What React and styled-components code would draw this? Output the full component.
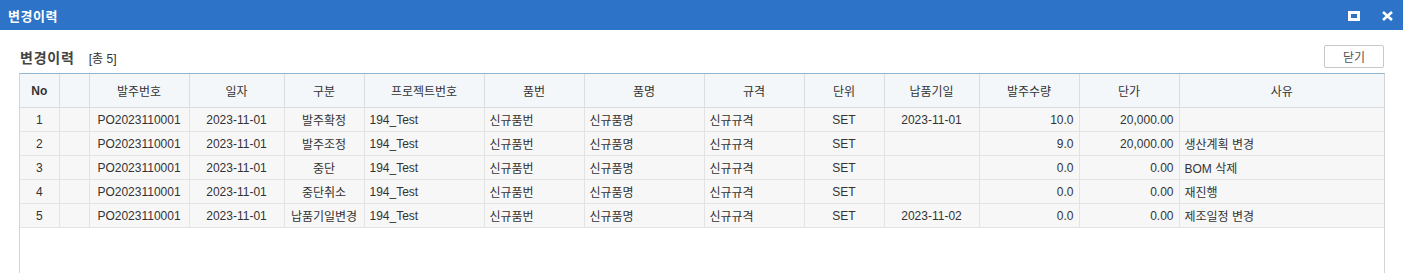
import styled, { createGlobalStyle } from "styled-components"

const GlobalStyle = createGlobalStyle`
    html, body {
        margin: 0;
        padding: 0;
        background: #ffffff;
        overflow: hidden;
    }
    body {
        font-family: "Liberation Sans", "Noto Sans CJK KR", sans-serif;
        color: #333333;
    }
`

const columns = [
    { key: "no", label: "No", width: 39, align: "center" },
    { key: "chk", label: "", width: 30, align: "center" },
    { key: "po", label: "발주번호", width: 100, align: "center" },
    { key: "date", label: "일자", width: 95, align: "center" },
    { key: "type", label: "구분", width: 80, align: "center" },
    { key: "project", label: "프로젝트번호", width: 120, align: "left" },
    { key: "itemNo", label: "품번", width: 100, align: "left" },
    { key: "itemName", label: "품명", width: 120, align: "left" },
    { key: "spec", label: "규격", width: 100, align: "left" },
    { key: "unit", label: "단위", width: 80, align: "center" },
    { key: "due", label: "납품기일", width: 95, align: "center" },
    { key: "qty", label: "발주수량", width: 100, align: "right" },
    { key: "price", label: "단가", width: 100, align: "right" },
    { key: "reason", label: "사유", width: null, align: "left" },
]

const base = {
    po: "PO2023110001",
    date: "2023-11-01",
    project: "194_Test",
    itemNo: "신규품번",
    itemName: "신규품명",
    spec: "신규규격",
    unit: "SET",
}

const rows = [
    { no: 1, type: "발주확정", due: "2023-11-01", qty: "10.0", price: "20,000.00", reason: "" },
    { no: 2, type: "발주조정", due: "", qty: "9.0", price: "20,000.00", reason: "생산계획 변경" },
    { no: 3, type: "중단", due: "", qty: "0.0", price: "0.00", reason: "BOM 삭제" },
    { no: 4, type: "중단취소", due: "", qty: "0.0", price: "0.00", reason: "재진행" },
    { no: 5, type: "납품기일변경", due: "2023-11-02", qty: "0.0", price: "0.00", reason: "제조일정 변경" },
].map((r) => ({ ...base, ...r }))

export default function App() {
    return (
        <Window>
            <GlobalStyle />
            <TitleBar>
                <h1>변경이력</h1>
                <WinButtons>
                    <svg width="12" height="10" viewBox="0 0 12 10">
                        <rect x="1.5" y="1.5" width="9" height="7" fill="none" stroke="#fff" strokeWidth="3" />
                    </svg>
                    <svg width="11" height="10" viewBox="0 0 11 10">
                        <path d="M1 1 L10 9 M10 1 L1 9" stroke="#fff" strokeWidth="2.6" />
                    </svg>
                </WinButtons>
            </TitleBar>
            <Body>
                <Toolbar>
                    <Heading>
                        <h2>변경이력</h2>
                        <span>[총 {rows.length}]</span>
                    </Heading>
                    <CloseButton>닫기</CloseButton>
                </Toolbar>
                <Grid>
                    <table>
                        <colgroup>
                            {columns.map((c) => (
                                <col key={c.key} style={c.width ? { width: c.width } : undefined} />
                            ))}
                        </colgroup>
                        <thead>
                            <tr>
                                {columns.map((c) => (
                                    <HeadCell key={c.key} $bold={c.key === "no"}>
                                        {c.label}
                                    </HeadCell>
                                ))}
                            </tr>
                        </thead>
                        <tbody>
                            {rows.map((r) => (
                                <tr key={r.no}>
                                    {columns.map((c) => (
                                        <Cell key={c.key} $align={c.align}>
                                            {r[c.key]}
                                        </Cell>
                                    ))}
                                </tr>
                            ))}
                        </tbody>
                    </table>
                </Grid>
            </Body>
        </Window>
    )
}

const Window = styled.div`
    width: 1403px;
    height: 273px;
    overflow: hidden;
    display: flex;
    flex-direction: column;
`

const TitleBar = styled.header`
    height: 30px;
    flex: none;
    background: #2d74c8;
    display: flex;
    align-items: center;
    justify-content: space-between;
    padding: 0 10px 0 8px;
    h1 {
        margin: 0;
        font-size: 13px;
        font-weight: bold;
        color: #ffffff;
        letter-spacing: 0.5px;
    }
`

const WinButtons = styled.div`
    display: flex;
    align-items: center;
    gap: 22px;
    padding-top: 1px;
`

const Body = styled.main`
    flex: 1;
    padding: 15px 18px 0 19px;
    display: flex;
    flex-direction: column;
`

const Toolbar = styled.div`
    display: flex;
    align-items: center;
    justify-content: space-between;
    height: 23px;
    margin-bottom: 5px;
`

const Heading = styled.div`
    display: flex;
    align-items: baseline;
    gap: 14px;
    padding-left: 1px;
    h2 {
        margin: 0;
        font-size: 14px;
        font-weight: bold;
        color: #444444;
        letter-spacing: 0.8px;
    }
    span {
        font-size: 12px;
        color: #333333;
    }
`

const CloseButton = styled.button`
    width: 60px;
    height: 23px;
    border: 1px solid #c8c8c8;
    border-radius: 2px;
    background: #ffffff;
    font-family: "Liberation Sans", "Noto Sans CJK KR", sans-serif;
    font-size: 12px;
    color: #555555;
    padding: 0;
    margin-right: 1px;
`

const Grid = styled.div`
    flex: 1;
    width: 1366px;
    box-sizing: border-box;
    border: 1px solid #d4d4d4;
    border-top: 1px solid #8fb7d3;
    border-bottom: none;
    table {
        width: 100%;
        border-collapse: collapse;
        table-layout: fixed;
    }
`

const HeadCell = styled.th`
    height: 33px;
    padding: 0;
    background: #f3f7fa;
    border-right: 1px solid #d9dde0;
    border-bottom: 1px solid #d9dde0;
    font-size: 12px;
    font-weight: ${(p) => (p.$bold ? "bold" : "normal")};
    color: #333333;
    text-align: center;
    &:last-child {
        border-right: none;
    }
`

const Cell = styled.td`
    height: 23px;
    padding: 0 5px;
    background: #f7f7f7;
    border-right: 1px solid #e3e3e3;
    border-bottom: 1px solid #e3e3e3;
    font-size: 12px;
    color: #333333;
    text-align: ${(p) => p.$align};
    white-space: nowrap;
    overflow: hidden;
    &:last-child {
        border-right: none;
    }
`
